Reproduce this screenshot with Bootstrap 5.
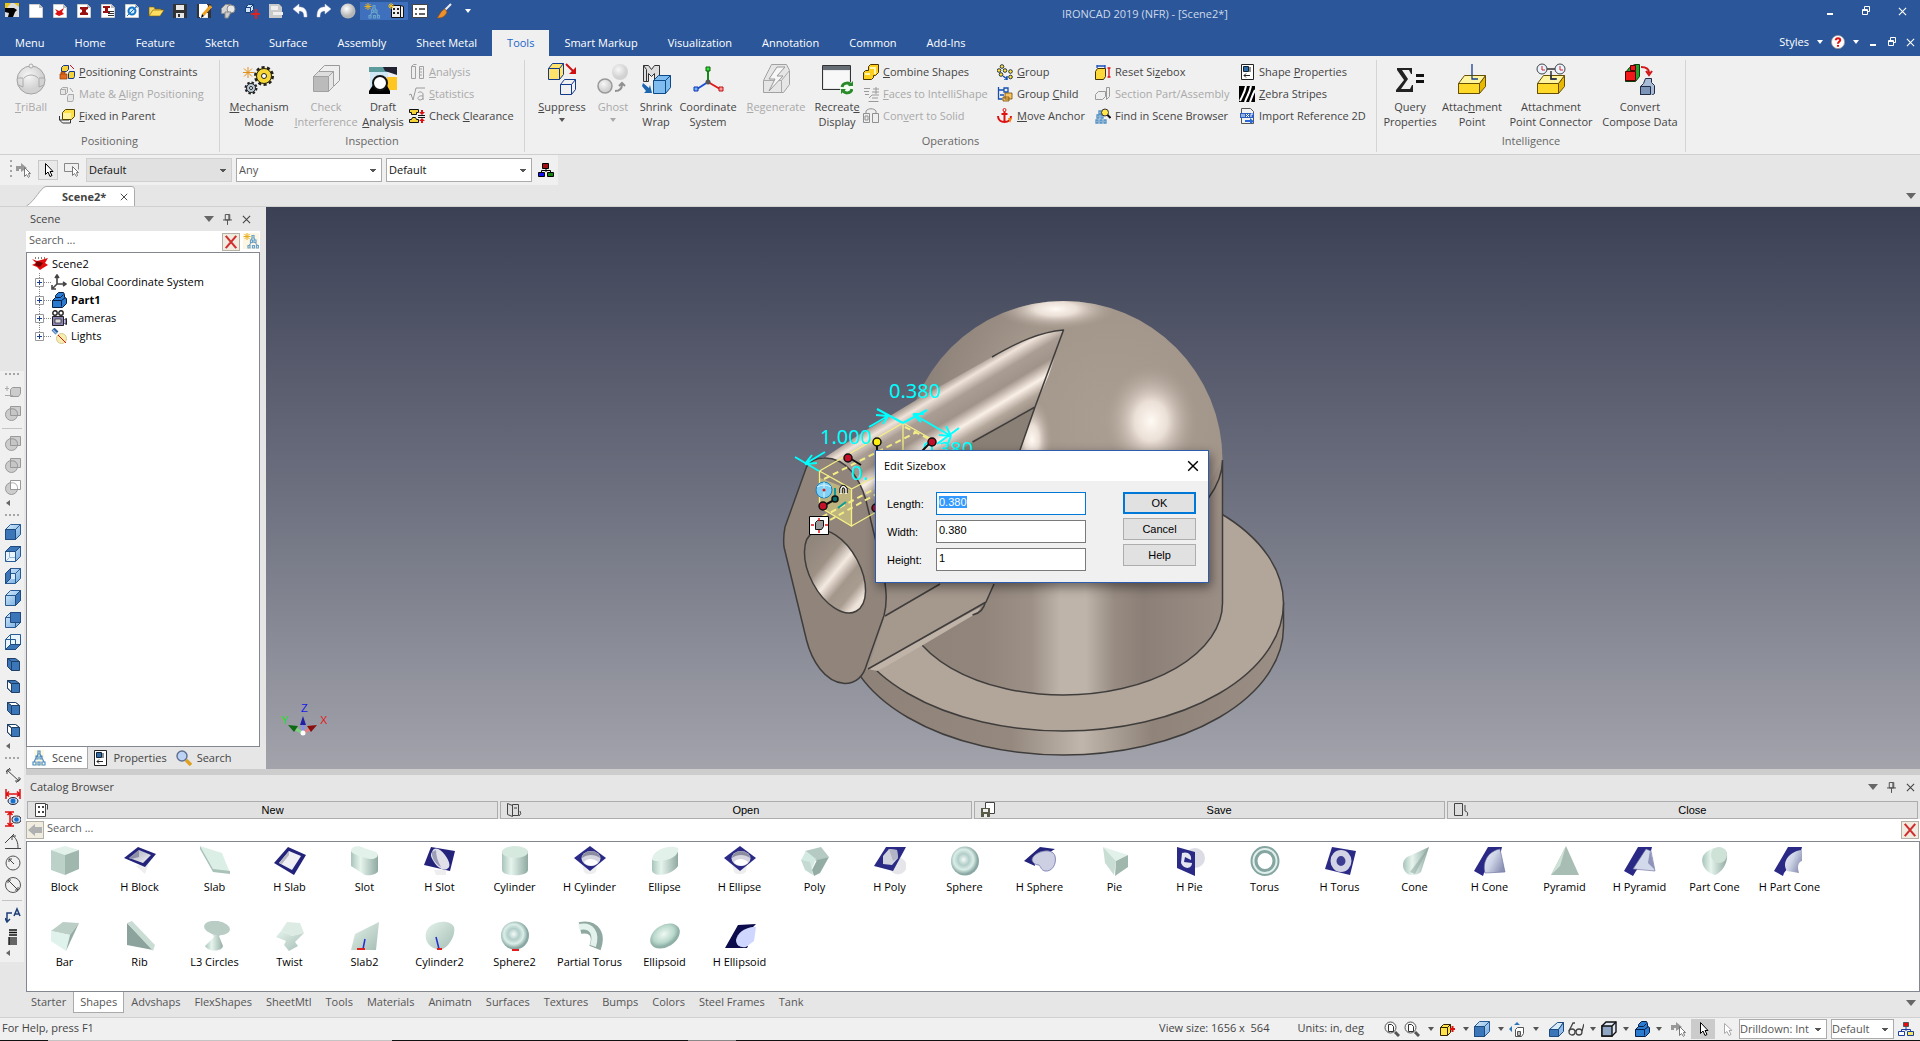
<!DOCTYPE html>
<html lang="en">
<head>
<meta charset="utf-8">
<meta name="viewport" content="width=device-width, initial-scale=1">
<title>IRONCAD 2019 (NFR) - [Scene2*]</title>
<link href="https://cdn.jsdelivr.net/npm/bootstrap@5.3.0/dist/css/bootstrap.min.css" rel="stylesheet">
<style>
  :root { --blue:#2b579a; --panel:#e6e6e6; --strip:#f0f0f0; --ink:#444; }
  body { font-family:"Open Sans","Noto Sans",sans-serif; font-size:11px; line-height:16px; color:var(--ink); background:var(--panel); min-height:100vh; overflow:hidden; }
  button, input, select { font:inherit; color:inherit; }
  .flat { background:none; border:0; padding:0; }
  a { color:inherit; text-decoration:none; }
  svg { display:block; flex:none; }
  .defs { position:absolute; }
  .i16 { width:16px; height:16px; }
  .i32 { width:32px; height:32px; }
  .tri { width:0; height:0; border:3px solid transparent; border-top:4px solid #555; border-bottom:0; flex:none; }
  .tri-lg { border-width:5px; border-top-width:6px; border-top-color:#666; border-bottom-width:0; }
  .tri-w { border-top-color:#fff; }
  .tri-off { border-top-color:#aaa; }

  /* title bar */
  .topbar { background:var(--blue); color:#fff; }
  .qat { height:28px; padding-top:2px; }
  .qat .flat { width:24px; height:18px; display:grid; place-items:center; }
  .qat .lit { background:#3f70bd; }
  .apptitle { color:#cdd9ea; padding:4px 0 0 370px; }
  .winbtns .flat { width:36px; }
  .menu-row { height:28px; }
  .menu-row .nav-item a { display:block; padding:0 15px; line-height:26px; height:26px; margin-top:2px; }
  .menu-row .nav-item .current { background:var(--strip); color:#1a66c8; }
  .mdi .flat { width:19px; display:grid; place-items:center; }

  /* ribbon */
  .ribbon { background:var(--strip); border-bottom:1px solid #cfcfcf; }
  .rgroup { border-right:1px solid #d4d4d4; margin:4px 0 2px; }
  .rbody { display:grid; height:73px; }
  .g-pos { grid-template-columns:54px 161px; padding-left:4px; }
  .g-ins { grid-template-columns:70px 64px 50px 116px; padding-left:4px; }
  .g-ops { grid-template-columns:56px 46px 40px 64px 72px 50px 134px 98px 144px 138px; padding-left:9px; }
  .g-int { grid-template-columns:66px 58px 100px 84px; }
  .g-int .rbig:last-child { padding-right:6px; }
  .rtitle { height:19px; text-align:center; color:#666; }
  .rbig { display:flex; flex-direction:column; align-items:center; padding-top:3px; line-height:15px; white-space:nowrap; }
  .rbig svg { margin-bottom:4px; }
  .rcol { padding-top:1px; }
  .rsmall { display:flex; align-items:center; height:22px; gap:4px; white-space:nowrap; }
  .rsmall svg { margin-left:1px; }
  .off { color:#a9a9a9; }
  .off svg { filter:grayscale(1); opacity:.5; }

  /* selection bar */
  .selbar { background:var(--strip); width:max-content; height:30px; padding:0 2px 0 10px; }
  .selbar .flat { width:20px; height:20px; display:grid; place-items:center; }
  .selbar .pressed { border:1px solid #c9c9c9; background:#e9e9e9; }
  .grip { width:2px; height:20px; margin-right:2px; background:repeating-linear-gradient(#a5a5a5 0 2px,transparent 2px 5px); }
  .combo { appearance:none; border:1px solid #ababab; border-radius:0; background:#fff conic-gradient(from 315deg at 50% 100%,#555 90deg,transparent 0) no-repeat right 5px center/6px 3px; padding:0 14px 0 2px; height:24px; width:146px; color:#111; }
  .combo:disabled { background-color:#e1e1e1; opacity:1; border-color:#d0d0d0; color:#111; }
  .combo.soft { color:#555; }

  .doc-row { height:22px; border-bottom:1px solid #d0d0d0; }
  .doc-tab { margin-left:26px; height:20px; width:109px; position:relative; padding:2px 7px 0 36px; }
  .doc-tab > svg { position:absolute; left:0; top:0; }
  .doc-tab > b, .doc-tab > button { position:relative; }

  /* vertical tools */
  .tools { width:26px; flex:none; }
  .toolstrip { background:var(--strip); margin-top:164px; width:24px; }
  .toolstrip .flat { width:24px; height:22px; display:grid; place-items:center; padding-left:2px; }
  .toolstrip hr { margin:4px 2px 3px; border:0; border-top:1px solid #c4c4c4; opacity:1; }
  .hgrip { width:15px; height:2px; margin:2px 0 5px 5px; background:repeating-linear-gradient(90deg,#a5a5a5 0 2px,transparent 2px 4px); }
  .left-tri { border:3px solid transparent; border-right:4px solid #666; border-left:0; width:0; height:0; margin:2px 0 6px 6px; }

  /* scene panel */
  .scene { width:234px; flex:none; }
  .pane-head { height:24px; color:#444; }
  .hbtn { width:19px; display:grid; place-items:center; }
  .tree { background:#fff; border:1px solid #828790; list-style:none; padding:2px 0 0 5px; margin:0; color:#000; }
  .tree li { height:18px; display:flex; align-items:center; }
  .tree .kid { padding-left:3px; }
  .search { border:0; outline:0; background:#fff; color:#555; padding:0 3px 4px; height:20px; min-width:0; }
  .search::placeholder { color:#5a5a5a; opacity:1; }
  .findrow { background:#fff; display:flex; align-items:flex-start; height:21px; }
  .catfind { height:22px; padding-right:1px; }
  .xbtn { width:18px; height:18px; margin-top:2px; border:1px solid #b5b0a5; background:#f0ece0; padding:0; display:grid; place-items:center; }
  .treebtn { margin:2px 1px 0 3px; background:#fdf6e2; }
  .ptab { height:22px; padding:0 5px 0 4px; display:flex; align-items:center; gap:5px; }
  .ptab.on { background:#fff; border:1px solid #aaa; border-top:0; }

  /* viewport */
  .view3d { background:linear-gradient(#3b4055,#6c6f7e 50%,#a2a3ab); position:relative; margin-left:6px; }
  .view3d > svg { position:absolute; left:0; top:0; width:100%; height:100%; }
  .dlg { position:absolute; left:609px; top:243px; width:334px; background:#f0f0f0; border:1px solid #2b5cb0; box-shadow:2px 4px 10px rgba(0,0,0,.45); color:#000; font-family:"Liberation Sans",Arial,sans-serif; }
  .dlg-head { background:#fff; height:30px; padding:0 9px 0 8px; font-family:"Open Sans",sans-serif; }
  .dlg-body { padding:11px 12px 11px 11px; }
  .dlg .fields { display:grid; grid-template-columns:49px 150px; row-gap:5px; align-items:center; }
  .dlg input { height:23px; border:1px solid #7a7a7a; padding:0 3px 4px 2px; outline:0; background:#fff; }
  .dlg input:focus { border-color:#0078d7; }
  .dlg input::selection { background:#3399ff; color:#fff; }
  .dlg .pushes { display:grid; gap:4px; align-content:start; margin-left:auto; }
  .push { width:73px; height:22px; border:1px solid #adadad; background:#e1e1e1; padding:0; }
  .push.def { border:2px solid #0078d7; }

  /* catalog */
  .split { height:6px; background:#cdcdcd; }
  .catbtns { display:grid; grid-template-columns:repeat(4,1fr); gap:2px; padding:2px 2px 0 1px; font-family:"Liberation Sans",Arial,sans-serif; color:#000; }
  .catbtn { height:18px; border:1px solid #adadad; background:#e1e1e1; position:relative; padding:0 0 0 20px; }
  .catbtn svg { position:absolute; left:5px; top:0; }
  .shapes { background:#fff; border:1px solid #828790; height:151px; padding-right:60px; color:#000; }
  .shape { width:75px; height:75px; padding-top:4px; display:flex; flex-direction:column; align-items:center; white-space:nowrap; }
  .shape svg { width:32px; height:30px; margin-bottom:3px; }
  .ctabs { height:25px; color:#555; }
  .ctabs a { padding:2px 6px; height:21px; border:1px solid transparent; border-top:0; }
  .ctabs a:first-child { padding-left:4px; }
  .ctabs a.on { background:#fff; border-color:#aaa; }

  /* status bar */
  .status { height:23px; background:var(--strip); border-top:1px solid #d0d0d0; padding:0 2px; }
  .status > span { padding-bottom:2px; }
  .status .flat { display:grid; place-items:center; height:20px; width:24px; }
  .status .drop { width:35px; display:flex; align-items:center; justify-content:space-between; padding:0 5px 0 0; }
  .status .tight { width:33px; }
  .status .pressed { background:#cbcbcb; }
  .status .combo { height:20px; color:#555; padding-left:0; }
  .status .drill { width:88px; }
  .status .conf { width:63px; }
  .edge { height:1px; background:linear-gradient(90deg,#111 48px,#c4c4c4 0 392px,#111 0 688px,#888 0 736px,#111 0); }
</style>
</head>
<body class="d-flex flex-column">

<svg width="0" height="0" class="defs" aria-hidden="true">
  <defs>
    <linearGradient id="gCyl"><stop offset="0" stop-color="#a9c4bb"/><stop offset=".35" stop-color="#e6f5ee"/><stop offset="1" stop-color="#8fa9a1"/></linearGradient>
    <linearGradient id="gPale" x2="1" y2="1"><stop offset="0" stop-color="#e4f3ec"/><stop offset="1" stop-color="#a6beb5"/></linearGradient>
    <linearGradient id="gGrey" x2="1" y2="1"><stop offset="0" stop-color="#a6a7ba"/><stop offset="1" stop-color="#f4f4f8"/></linearGradient>
    <linearGradient id="gLav" x2="1" y2=".6"><stop offset="0" stop-color="#eef0fa"/><stop offset=".5" stop-color="#cdd4e6"/><stop offset="1" stop-color="#8c92b4"/></linearGradient>
    <radialGradient id="gBall" cx=".45" cy=".45"><stop offset="0" stop-color="#f4fbf8"/><stop offset=".4" stop-color="#b2cdc8"/><stop offset=".7" stop-color="#dbeee8"/><stop offset="1" stop-color="#8aa8a3"/></radialGradient>
    <radialGradient id="gEgg" cx=".5" cy=".4"><stop offset="0" stop-color="#eef9f4"/><stop offset=".7" stop-color="#b9d8cc"/><stop offset="1" stop-color="#8fb0a6"/></radialGradient>
    <linearGradient id="gBlue" y2="1" x2="1"><stop offset="0" stop-color="#d8ebfb"/><stop offset="1" stop-color="#6fa8de"/></linearGradient>
    <radialGradient id="gOrb" cx=".4" cy=".35"><stop offset="0" stop-color="#fff"/><stop offset="1" stop-color="#b5b5b5"/></radialGradient>
  </defs>

  <!-- small icons, 16 x 16 -->
  <symbol id="app" viewBox="0 0 16 16"><path fill="#ddd" d="M1 1h14v14H1z"/><path fill="#e8c418" d="M1 1h6l-5 6H1zM10 1h5v4z"/><path d="M1 6h9l3 2-2 2-2 5H4l1-4-4-1z"/></symbol>
  <symbol id="page" viewBox="0 0 16 16"><path fill="#fff" stroke="#ccc" d="M1.500 1.500h10l3 3v10h-13z"/><path fill="#bbb" d="M11 1l4 4h-4z"/></symbol>
  <symbol id="page-red" viewBox="0 0 16 16"><use href="#page"/><path fill="#d11" d="M3 6l4 2 5-3-2 4 2 2-5 2-4-2 2-2z"/></symbol>
  <symbol id="page-i" viewBox="0 0 16 16"><use href="#page"/><path fill="#911" d="M4 4h8v2l-2 1v2l2 1v2H4v-2l2-1V7L4 6z"/></symbol>
  <symbol id="page-ii" viewBox="0 0 16 16"><use href="#page"/><path fill="#911" d="M3 3h7v2H8v3h2v2H3V8h2V5H3z"/><path stroke="#333" d="M8 10.500h6M8 12.500h6M8 8.500h6"/></symbol>
  <symbol id="page-blue" viewBox="0 0 16 16"><use href="#page"/><circle cx="8" cy="8" r="3.500" fill="#cfe8ff" stroke="#1976c5" stroke-width="2"/><path stroke="#1976c5" d="M3 13l10-10"/></symbol>
  <symbol id="folder" viewBox="0 0 16 16"><path fill="#f6d567" stroke="#7a5a00" stroke-width=".6" d="M1 13V4h5l1 2h6v2"/><path fill="#ffdf60" stroke="#7a5a00" stroke-width=".6" d="M1 13l4-6h11l-4 6z"/></symbol>
  <symbol id="disk" viewBox="0 0 16 16"><path fill="#333" d="M1 1h14v14H1z"/><path fill="#e7e7e7" d="M4 2h8v5H4zM4 10h8v5H4z"/><path fill="#333" d="M6 11h2v3H6z"/></symbol>
  <symbol id="disk-edit" viewBox="0 0 16 16"><use href="#disk"/><path fill="#fff" d="M3 1h8v13H3z"/><path stroke="#f0a020" stroke-width="3" d="M7 12l8-9"/><path d="M5 15l1-4 2 2z"/></symbol>
  <symbol id="greybox" viewBox="0 0 16 16"><path fill="#d4d4d4" stroke="#8a8a8a" d="M1.500 5.500l4-4h5v5l-4 4h-5z"/><circle cx="11" cy="6" r="4" fill="#e8e8e8" stroke="#8a8a8a"/><path fill="#ccc" stroke="#888" d="M5 9h6l-3 6H5z"/></symbol>
  <symbol id="addpart" viewBox="0 0 16 16"><path fill="#cfe3fa" stroke="#163f7a" d="M1.500 4.500l3-3h5v5l-3 3h-5z"/><path stroke="#163f7a" fill="none" d="M1.500 4.500h5v5M6.500 4.500l3-3"/><path stroke="#d22" stroke-width="2" d="M12 6v10M7 11h9"/></symbol>
  <symbol id="greydisk" viewBox="0 0 16 16"><path fill="#c9c9c9" d="M1 1h10l3 3v11H1z"/><path fill="#eee" d="M3 3h7v4H3zM5 9h10v3H5z"/></symbol>
  <symbol id="undo" viewBox="0 0 16 16"><path fill="#fff" stroke="#ccd" stroke-width=".5" d="M1 6l6-5v3c5 0 8 2 8 10h-3c0-4-1-6-5-6v3z"/></symbol>
  <symbol id="redo" viewBox="0 0 16 16"><path fill="#fff" stroke="#ccd" stroke-width=".5" d="M15 6L9 1v3C4 4 1 6 1 14h3c0-4 1-6 5-6v3z"/></symbol>
  <symbol id="orb" viewBox="0 0 16 16"><circle cx="8" cy="8" r="7.500" fill="url(#gOrb)"/></symbol>
  <symbol id="scenetree" viewBox="0 0 16 16"><path fill="none" stroke="#69a3cc" stroke-width="1.200" d="M9 2.500h2v2.500H9zM7.500 7h2v2.500h-2zM11 7h2v2.500h-2zM5 12.500h2v2.500H5zM9.500 12.500h2v2.500h-2zM13.500 12.500h2v2.500h-2zM9 5l-1 2M11 5l1 2M8 10l-2 2.500M12.500 10l2 2.500"/><path stroke="#e8b020" d="M4 0v7M.5 3.500h7M1.500 1l5 5M6.500 1l-5 5"/></symbol>
  <symbol id="atree" viewBox="0 0 16 16"><path fill="#fff8e0" d="M3 0h10v16H3z"/><path fill="none" stroke="#4f8fc4" stroke-width="1.200" d="M7 1h2v3H7zM5 6h2v3H5zM9 6h2v3H9zM2 12h3v3H2zM7 12h2v3H7zM11 12h3v3h-3zM7 4L3 12M9 4l4 8"/></symbol>
  <symbol id="gridicon" viewBox="0 0 16 16"><path fill="#eee" stroke="#111" d="M3.500 2.500h9v12h-9zM12.500 2.500l3 1v11h-3"/><path fill="#222" d="M5 5h2v2H5zM9 5h2v2H9zM5 9h2v2H5zM9 9h2v2H9z"/><path stroke="#f0c020" d="M3 0v6M0 3h6M1 1l4 4M5 1L1 5"/></symbol>
  <symbol id="listicon" viewBox="0 0 16 16"><path fill="#fff" stroke="#444" d="M.5 1.500h15v13H.5z"/><path stroke="#333" stroke-width="1.500" d="M3 6h2M3 11h2M7 6h6M7 11h6"/></symbol>
  <symbol id="brush" viewBox="0 0 16 16"><path stroke="#eee" stroke-width="2" d="M8 8l7-7"/><path fill="#f0902a" stroke="#8a4a10" stroke-width=".6" d="M9 6l2 3c-2 5-5 6-10 6 3-3 3-7 8-9z"/></symbol>
  <symbol id="cubes-y" viewBox="0 0 16 16"><path fill="#f4d33a" stroke="#123a8c" d="M2.500 3.500l2-2h5v4l-2 2h-5zM9.500 9.500l1-2h5v5l-1 2h-5z"/><path fill="#e06a20" stroke="#963c00" stroke-width=".7" d="M1 10h7v5H1zM2 10V8h4v2"/><path stroke="#d11" d="M11 1l4 4"/></symbol>
  <symbol id="cubes-g" viewBox="0 0 16 16"><path fill="#ddd" stroke="#666" d="M1.500 3.500l2-2h5v5l-2 2h-5zM8.500 10.500l1-2h5v5l-1 2h-5zM1.500 3.500h5v5"/><path stroke="#555" d="M11 2l3 4"/></symbol>
  <symbol id="fixed" viewBox="0 0 16 16"><path fill="none" stroke="#333" d="M.5 8v4l3 3h8v-3M1 12h9"/><path fill="#ffdf45" stroke="#554400" d="M3.500 4.500l3-3h9v7l-3 3h-9z"/><path fill="#fff3a0" d="M4 5h8v6H4z"/></symbol>
  <symbol id="analysis" viewBox="0 0 16 16"><path fill="#eee" stroke="#555" d="M2.500 2.500h4v12h-4zM10.500 2.500h4v12h-4zM2.500 2.500l2-2h3"/><path stroke="#555" d="M11 5h2M11 8h2M11 11h2"/></symbol>
  <symbol id="stat" viewBox="0 0 16 16"><path fill="none" stroke="#444" d="M0 9l2-1 2 6 3-12h9M9 7c1-2 5-1 5 1v6M14 10c-6-1-6 4-3 4 1 0 3-1 3-2"/></symbol>
  <symbol id="clear" viewBox="0 0 16 16"><path fill="#f4d33a" stroke="#111" d="M.5 1.500h9v3h-2v2h-5v-2h-2zM.5 14.500h9v-3h-2l-1-2h-3l-1 2h-2z"/><path stroke="#111" d="M9 7.500h7M9 9.500h7"/><path fill="#d11" d="M12 2h2v2h2l-3 3-3-3h2zM12 15h2v-2h2l-3-3-3 3h2z"/></symbol>
  <symbol id="combine" viewBox="0 0 16 16"><path fill="#ffcf20" stroke="#4a3500" d="M5.500 2.500l2-2h8v8l-3 3h-2v2l-2 2h-8v-7l2-2h3z"/><path stroke="#fff6b0" stroke-width="2" fill="none" d="M7 4h5v6M2 10h5"/></symbol>
  <symbol id="faces" viewBox="0 0 16 16"><path fill="none" stroke="#444" d="M1 2.500h6M1 5.500h5M2 8.500h4M5.500 15.500h10M6 12l3-3h7M9 12h6M9 6h7M13 1v7M10 3h6"/></symbol>
  <symbol id="convert" viewBox="0 0 16 16"><path fill="#eee" stroke="#333" d="M.5 5.500h6v9h-6zM9.500 5.500h6v9h-6zM3 6v-3c2-3 8-3 10 0v3M2 8h3v4H2z"/></symbol>
  <symbol id="group" viewBox="0 0 16 16"><g fill="#ffe23a" stroke="#123" stroke-width=".9"><circle cx="5" cy="2.500" r="1.800"/><circle cx="2" cy="6.500" r="1.800"/><circle cx="8" cy="6.500" r="1.800"/><circle cx="13.500" cy="7.500" r="1.800"/><circle cx="4" cy="10.500" r="1.800"/><circle cx="13.500" cy="13" r="1.800"/></g><path fill="none" stroke="#1550b0" stroke-width="1.500" d="M6 12l4 3M10 12v4H7"/></symbol>
  <symbol id="gchild" viewBox="0 0 16 16"><path fill="none" stroke="#1550b0" stroke-width="1.300" d="M1.500 1v12h4M1.500 4h5M7 2h4v4H7zM3 9h4"/><path fill="#f6c56a" stroke="#7a4a00" stroke-width=".8" d="M8 7h7v6H8zM6 11h6v4H6z"/></symbol>
  <symbol id="anchor" viewBox="0 0 16 16"><path fill="none" stroke="#d11" stroke-width="2" d="M7.500 3v11M4.500 6h6M1 8c0 4 3 6 6.500 6S14 12 14 8"/><circle cx="7.500" cy="2" r="1.500" fill="#fff" stroke="#d11"/><path fill="#f08010" d="M11 10h4l-2 5z"/></symbol>
  <symbol id="resetbox" viewBox="0 0 16 16"><path fill="#ffd93a" stroke="#443300" d="M.5 7.500l2-3h8v8l-2 3h-8z"/><path stroke="#1a50c0" stroke-width="1.300" fill="none" d="M2 1v3M10 1v3M2 2h8"/><path stroke="#d11" stroke-width="1.300" d="M14 4v9M12.500 4h3M12.500 13h3"/></symbol>
  <symbol id="section" viewBox="0 0 16 16"><path fill="#eee" stroke="#444" d="M.5 8.500l3-3h7v5l-3 3h-7zM11.500 1.500h3v9l-3 3z"/></symbol>
  <symbol id="find" viewBox="0 0 16 16"><path fill="none" stroke="#4f8fc4" stroke-width="1.300" d="M4 3h2v3H4zM2 7h2v3H2zM6 7h2v3H6zM1 12h2v3H1zM5 12h2v3H5zM9 12h2v3H9z"/><circle cx="10" cy="4.500" r="3.500" fill="#ffe64a" stroke="#333"/><path stroke="#111" stroke-width="2" d="M12.500 7l3 3"/></symbol>
  <symbol id="props" viewBox="0 0 16 16"><path fill="#fff" stroke="#222" d="M2.500.5h12v15h-12z"/><path fill="#2f6aa8" stroke="#123" d="M4.500 2.500h5v5h-5z"/><path stroke="#222" fill="none" d="M11 3v5M5 11.500h6M7 9.500l-2 2 2 2"/></symbol>
  <symbol id="zebra" viewBox="0 0 16 16"><path d="M0 0h16v16H0z"/><path stroke="#fff" stroke-width="2" fill="none" d="M1 15c2-5 4-6 6-15M6 16c2-6 4-7 6-16M11 16c2-5 2-6 5-12"/></symbol>
  <symbol id="dxf" viewBox="0 0 16 16"><path fill="#f2f2f2" stroke="#555" d="M2.500.5h9l3 3v12h-12z"/><path fill="#2a5fc0" d="M1 5h14v5H1z"/><path stroke="#fff" fill="none" d="M3 6v3M5 6v3M7 6l3 3M10 6L7 9M12 9V6h2"/><path fill="#2a6ad8" d="M6 12h5v-2l4 3.500-4 2.500v-2H6z"/></symbol>
  <symbol id="arrowcur" viewBox="0 0 16 16"><path fill="#999" d="M0 9V4h5V1l6 5-6 4V7H3v2z"/><path fill="#fff" stroke="#777" d="M8.500 5.500v9l2-2 2 3 1-1-1-3h2z"/></symbol>
  <symbol id="cursor" viewBox="0 0 16 16"><path fill="#fff" stroke="#000" d="M5.500 1.500v11l2.500-2.500 2 4.500 2-1-2-4h3z"/></symbol>
  <symbol id="cursor-g" viewBox="0 0 16 16"><path fill="#fff" stroke="#aaa" d="M5.500 2.500v10l2.500-2 2 4 2-1-2-4h3z"/></symbol>
  <symbol id="boxcur" viewBox="0 0 16 16"><path fill="none" stroke="#888" d="M8 9.500H.5v-8h14v6"/><path fill="#fff" stroke="#777" d="M8.500 4.500v9l2-2 2 3 1-1-1-3h2z"/></symbol>
  <symbol id="hier" viewBox="0 0 16 16"><path fill="none" stroke="#000" d="M8 6v4M3.500 12V8.500h9V12"/><path fill="#a11010" stroke="#000" d="M4.500 1.500h6v5h-6z"/><path fill="#1010f0" stroke="#000" d="M.5 10.500h6v4h-6z"/><path fill="#108010" stroke="#000" d="M9.500 10.500h6v4h-6z"/></symbol>
  <symbol id="hier2" viewBox="0 0 16 16"><path fill="none" stroke="#1a3fa0" d="M8 6v4M3.500 12V8.500h9V12"/><path fill="#e01010" stroke="#555" d="M5.500 1.500h5v4h-5z"/><path fill="#fff" stroke="#1a3fa0" d="M.5 10.500h6v4h-6z"/><path fill="#f4e860" stroke="#1a3fa0" d="M9.500 10.500h6v4h-6z"/></symbol>
  <symbol id="x" viewBox="0 0 10 10"><path stroke="currentColor" stroke-width="1.200" d="M1 1l8 8M9 1L1 9"/></symbol>
  <symbol id="xred" viewBox="0 0 16 16"><path stroke="#d03030" stroke-width="2.400" d="M2 1l12 14M14 1L2 15"/></symbol>
  <symbol id="pin" viewBox="0 0 10 12"><path fill="none" stroke="currentColor" d="M2.500.5h5v6h-5zM0 6.500h10M5 7v5M6.500 1v5"/></symbol>
  <symbol id="min" viewBox="0 0 10 10"><path fill="currentColor" d="M2 7h6v2H2z"/></symbol>
  <symbol id="restore" viewBox="0 0 10 10"><path fill="none" stroke="currentColor" d="M3.500 3V.5h5v5H6.500M1.500 3.500h5v5h-5zM1 4.500h6"/></symbol>
  <symbol id="help" viewBox="0 0 16 16"><circle cx="8" cy="8" r="7.500" fill="#fff" stroke="#999"/><path fill="none" stroke="#e01010" stroke-width="2.400" d="M5.500 6c0-3 5-3 5 0 0 1.500-2.500 1.500-2.500 4M8 11.500v2"/></symbol>
  <!-- tree icons -->
  <symbol id="t-scene" viewBox="0 0 16 16"><path fill="#e01010" d="M0 3l5 2 4-1 7-2-3 5 3 2-5 3-3 2-3-3-5-2 4-2z"/><path fill="#700" d="M5 5l6 2-3 4-5-2z"/><path stroke="#000" stroke-dasharray="1 2" d="M3 2h10"/></symbol>
  <symbol id="t-axes" viewBox="0 0 16 16"><path fill="none" stroke="#444" stroke-width="1.600" d="M6 2v8h8M6 10l-4 4M4 4l2-3 2 3M12 8l3 2-3 2M1 11v4h4"/></symbol>
  <symbol id="t-part" viewBox="0 0 16 16"><path fill="#2a7bd0" stroke="#06204a" d="M1.500 8.500l3-3v-2l3-3h5l1 2v3l2 1v5l-4 4h-10z"/><path fill="none" stroke="#06204a" d="M1.500 8.500h9v6M10.500 8.500l4-3M4.500 5.500h5l3-3"/></symbol>
  <symbol id="t-cam" viewBox="0 0 16 16"><g fill="#fff" stroke="#222" stroke-width="1.400"><circle cx="4" cy="3" r="2.200"/><circle cx="10" cy="3" r="2.200"/></g><path fill="#8a84b8" stroke="#222" d="M1.500 6.500h11v9h-11zM13.500 9.500l2-1v6l-2-1"/><path fill="#ddd" stroke="#222" stroke-width=".7" d="M4 9h6v4H4z"/></symbol>
  <symbol id="t-light" viewBox="0 0 16 16"><circle cx="10.500" cy="10.500" r="5" fill="#f6edb0" stroke="#d8c890"/><path stroke="#2d5c96" stroke-width="4" d="M2 1l4 4"/><path stroke="#9cc4ee" stroke-width="1.500" d="M2 2l4 4"/><path stroke="#d11" d="M7 7l8 8"/></symbol>
  <symbol id="plus" viewBox="0 0 9 9"><path fill="#fff" stroke="#999" d="M.5.5h8v8h-8z"/><path stroke="#1a3f8c" d="M2 4.500h5M4.500 2v5"/></symbol>
  <symbol id="mag" viewBox="0 0 16 16"><path stroke="#e0a020" stroke-width="3.500" d="M10 10l5 5"/><circle cx="6" cy="6" r="5" fill="#bcd3f6" stroke="#5f6f8f" stroke-width="1.400"/></symbol>
  <!-- view and tool strip icons -->
  <symbol id="v-base" viewBox="0 0 16 16"><path fill="url(#gBlue)" stroke="#285a94" d="M.5 5.500l5-5h10v10l-5 5H.5z"/><path fill="none" stroke="#285a94" d="M.5 5.500h10v10M10.500 5.500l5-5"/></symbol>
  <symbol id="v-front" viewBox="0 0 16 16"><use href="#v-base"/><path fill="#3a76b8" stroke="#1f4a80" d="M.5 5.500h10v10H.5z"/></symbol>
  <symbol id="v-top" viewBox="0 0 16 16"><use href="#v-base"/><path fill="#3a76b8" stroke="#1f4a80" d="M.5 5.500l5-5h10l-5 5z"/><path fill="#eaf4fd" d="M1 6h9v9H1z"/><path fill="none" stroke="#8fb4dc" d="M4.500 6v5.500L1 15M5 11.500h5"/></symbol>
  <symbol id="v-left" viewBox="0 0 16 16"><use href="#v-base"/><path fill="#3a76b8" stroke="#1f4a80" d="M.5 5.500l5-5v10l-5 5z"/><path fill="#d8ebfb" d="M6 6h4v5H6z"/></symbol>
  <symbol id="v-right" viewBox="0 0 16 16"><use href="#v-base"/><path fill="#3a76b8" stroke="#1f4a80" d="M10.500 5.500l5-5v10l-5 5z"/></symbol>
  <symbol id="v-back" viewBox="0 0 16 16"><use href="#v-base"/><path fill="#3a76b8" stroke="#1f4a80" d="M5.500.5h10v10h-10z"/></symbol>
  <symbol id="v-bottom" viewBox="0 0 16 16"><path fill="#eaf4fd" stroke="#285a94" d="M.5 5.500l5-5h10v10l-5 5H.5zM5.500 1v10M.5 5.500h10v10"/><path fill="#3a76b8" stroke="#1f4a80" d="M.5 15.500l5-5h10l-5 5z"/></symbol>
  <symbol id="v-iso" viewBox="0 0 16 16"><path fill="#3a76b8" stroke="#1f3f66" d="M2.500 2.500h8l4 3v9H6.500l-4-4z"/><path fill="none" stroke="#1f3f66" d="M2.500 2.500l4 3h8M6.500 5.500v9"/></symbol>
  <symbol id="v-iso2" viewBox="0 0 16 16"><use href="#v-iso"/><path fill="#fff" stroke="#1f3f66" d="M2.500 3l4 3v8l-4-4z"/></symbol>
  <symbol id="v-iso3" viewBox="0 0 16 16"><use href="#v-iso"/><path fill="#fff" stroke="#1f3f66" d="M2.500 2.500h8l4 3h-8z"/></symbol>
  <symbol id="v-iso4" viewBox="0 0 16 16"><use href="#v-iso3"/><path fill="#fff" stroke="#1f3f66" d="M2.500 3l4 3v8l-4-4z"/></symbol>
  <symbol id="b-add" viewBox="0 0 16 16"><path fill="#ccc" stroke="#999" d="M5.500 6.500l2-2h8v6l-2 3h-8z"/><path stroke="#aaa" d="M0 5.500h4M2 3v5M0 12.500h8"/></symbol>
  <symbol id="b-one" viewBox="0 0 16 16"><circle cx="6.500" cy="9.500" r="6" fill="#ccc" stroke="#999"/><path fill="#c4c4c4" fill-opacity=".8" stroke="#999" d="M5.500 1.500h10v9h-10z"/><path fill="none" stroke="#999" d="M6 4c4-1 7 2 6.500 6"/></symbol>
  <symbol id="b-two" viewBox="0 0 16 16"><circle cx="6.500" cy="9.500" r="6" fill="#ccc" stroke="#999"/><path fill="#fff" stroke="#999" d="M5.500 1.500h10v9h-10z"/><path fill="none" stroke="#aaa" d="M6 4c4-1 7 2 6.500 6"/></symbol>
  <symbol id="d-lin" viewBox="0 0 16 16"><path fill="none" stroke="#444" d="M2 3l12 11M1 5l4-4M11 15.500l5-4M2 7V3h4M10 14h4v-4"/></symbol>
  <symbol id="d-h" viewBox="0 0 16 16"><path stroke="#e01010" stroke-width="1.500" fill="none" d="M1 0v10M15 0v10M1 5h14M4 2.500L1.500 5 4 7.500M12 2.500L14.500 5 12 7.500"/><ellipse cx="8" cy="12" rx="5" ry="3.500" fill="#cde" stroke="#223"/><circle cx="8" cy="12" r="2.500" fill="#1670d0"/></symbol>
  <symbol id="d-v" viewBox="0 0 16 16"><path stroke="#e01010" stroke-width="1.500" fill="none" d="M0 1h9M0 15h9M5 1v14M2.500 4L5 1.500 7.500 4M2.500 12L5 14.500 7.500 12"/><ellipse cx="11.500" cy="8.500" rx="4.500" ry="3.500" fill="#cde" stroke="#223"/><circle cx="11.500" cy="8.500" r="2.300" fill="#1670d0"/></symbol>
  <symbol id="d-ang" viewBox="0 0 16 16"><path fill="none" stroke="#444" d="M0 15.500h16M0 10L9 1M8 3c4 3 5 7 5 12M7 7V3h4"/></symbol>
  <symbol id="d-rad" viewBox="0 0 16 16"><circle cx="8" cy="8" r="7" fill="none" stroke="#555"/><path fill="none" stroke="#444" d="M9 9L4 4M4 7V4h3"/></symbol>
  <symbol id="d-dia" viewBox="0 0 16 16"><circle cx="8" cy="8" r="7.500" fill="none" stroke="#555"/><path fill="none" stroke="#444" d="M3 3l10 10M3 6V3h3M10 13h3v-3"/></symbol>
  <symbol id="d-note" viewBox="0 0 16 16"><path fill="none" stroke="#1c3f78" stroke-width="1.500" d="M2 15V6h5M0 11l2 4 3-3M9 9l3-7 3 7M10 7h4"/></symbol>
  <symbol id="d-thread" viewBox="0 0 16 16"><path fill="#666" d="M4 8h8v8H4z"/><path stroke="#111" stroke-width="1.300" d="M4 1h8M4 3.500h8M4 6h8M4 8v8"/></symbol>
  <!-- status icons -->
  <symbol id="zoomp" viewBox="0 0 16 16"><circle cx="6.500" cy="6.500" r="5.500" fill="#f4f4f4" stroke="#555"/><path fill="#fff" stroke="#333" d="M4.500 3.500h3l2 2v5h-5z"/><path stroke="#555" stroke-width="3" d="M11 11l4 4"/></symbol>
  <symbol id="boxy" viewBox="0 0 16 16"><path fill="#ffe34a" stroke="#332200" d="M1.500 6.500l3-3h7v8l-3 3h-7zM1.500 6.500h7v8M8.500 6.500l3-3"/><path stroke="#e01010" stroke-width="2" d="M13.500 5v6M11 8h5"/></symbol>
  <symbol id="walk" viewBox="0 0 16 16"><path fill="#2f75b8" d="M8 1l3 3H5zM0 8l3-3v6z"/><path fill="#fff" stroke="#555" d="M6.500 8.500l2-2h6v6l-2 3h-6z"/><path fill="#bbb" stroke="#555" d="M8.500 10.500h3v4h-3z"/></symbol>
  <symbol id="wedge" viewBox="0 0 16 16"><path fill="#d8ebfb" stroke="#1f4a80" d="M1.500 8.500l8-7h6l-5 7z"/><path fill="#3a76b8" stroke="#1f4a80" d="M1.500 8.500h9v7h-9z"/><path fill="#8fbce8" stroke="#1f4a80" d="M10.500 8.500l5-7v9l-5 5z"/></symbol>
  <symbol id="glasses" viewBox="0 0 16 16"><g fill="none" stroke="#444" stroke-width="1.300"><circle cx="4" cy="11" r="3"/><circle cx="11" cy="11" r="3"/><path d="M1 10L5 2h2M14 10l2-7M7 10h1"/></g></symbol>
  <symbol id="cubebk" viewBox="0 0 16 16"><path fill="#dfe8f4" stroke="#111" stroke-width="1.400" d="M1 5l4-4h10v10l-4 4H1z"/><path fill="#8fa6c4" stroke="#111" stroke-width="1.400" d="M1 5h10v10H1zM11 5l4-4"/></symbol>

  <!-- ribbon icons, 32 x 32 -->
  <symbol id="R-triball" viewBox="0 0 32 32"><circle cx="16" cy="17" r="14" fill="url(#gOrb)" stroke="#555"/><path fill="none" stroke="#666" d="M9 15c4-4 10-4 14 0M2 15h6v9l-5-2M30 15h-6v9l5-2"/><circle cx="16" cy="3" r="2" fill="#eee" stroke="#666"/></symbol>
  <symbol id="R-mech" viewBox="0 0 32 32"><circle cx="21" cy="13" r="8.500" fill="#f7d733" stroke="#222" stroke-width="3" stroke-dasharray="3 2.340"/><circle cx="21" cy="13" r="7.500" fill="#f7d733" stroke="#222"/><circle cx="21" cy="13" r="2.500" fill="#fff" stroke="#222"/><circle cx="8" cy="25" r="5" fill="#a8b8c4" stroke="#222" stroke-width="3" stroke-dasharray="2.200 1.700"/><circle cx="8" cy="25" r="4.500" fill="#b8c8d4" stroke="#222"/><circle cx="8" cy="25" r="1.500" fill="#fff" stroke="#222"/><path stroke="#e0901a" d="M5 4v11M0 9.500h11M1 5.500l8 8M9 5.500l-8 8"/></symbol>
  <symbol id="R-check" viewBox="0 0 32 32"><path fill="#eee" stroke="#444" d="M8.500 8.500l6-6h15v15l-6 6"/><path fill="#ccc" stroke="#555" d="M3.500 13.500l5-5h15l-5 5z"/><path fill="#888" stroke="#555" d="M3.500 13.500h15v15h-15z"/><path fill="#ddd" stroke="#555" d="M18.500 13.500l5-5v15l-5 5z"/></symbol>
  <symbol id="R-draft" viewBox="0 0 32 32"><path fill="#5d9c9c" d="M2 4h28v5H2z"/><path fill="#cfe8f4" d="M3 9h18v18H3z"/><path fill="#ffc520" d="M20 14h10v13H20z"/><path fill="#223" d="M16 4h14v8L18 8z"/><path d="M2 28l6-9h10l5 9v3H2z"/><circle cx="13" cy="20" r="7" fill="#fff" stroke="#111" stroke-width="2"/></symbol>
  <symbol id="R-suppress" viewBox="0 0 32 32"><path fill="#ffe36a" stroke="#123a8c" d="M2.500 5.500l4-5h11v11l-4 5h-11z"/><path fill="none" stroke="#123a8c" d="M2.500 5.500h11v11M13.500 5.500l4-5M14.500 21.500l4-5h11v10l-4 5h-11zM14.500 21.500h11v10M25.500 21.500l4-5"/><path stroke="#d01010" stroke-width="2" d="M20 1l8 8"/><path fill="#d01010" d="M30 4v7h-7z"/></symbol>
  <symbol id="R-ghost" viewBox="0 0 32 32"><circle cx="23" cy="9" r="8" fill="url(#gOrb)"/><circle cx="8" cy="23" r="7" fill="url(#gOrb)" stroke="#444" stroke-width="1.500"/><path fill="none" stroke="#333" stroke-width="2" d="M18 28c5 0 7-2 7-7M22 23l3-3 3 3"/></symbol>
  <symbol id="R-shrink" viewBox="0 0 32 32"><path fill="#ddd" stroke="#333" d="M3.500 2.500h5l3 4 3-4h5v16h-5v-8l-3 3-3-3v8h-5zM3.500 2.500l3 4v12"/><path fill="#7fbcf0" stroke="#0f4a88" d="M13.500 17.500l5-5h12v12l-5 6h-12z"/><path fill="none" stroke="#0f4a88" d="M13.500 17.500h12v13M25.500 17.500l5-5"/><path fill="#1c66b0" d="M3 20l6 5 1-3 2 8-8 0 2-2-4-5z"/></symbol>
  <symbol id="R-coord" viewBox="0 0 32 32"><path stroke="#138a13" stroke-width="2" d="M16 6v13"/><path stroke="#1a50d8" stroke-width="2" d="M16 19L5 26"/><path stroke="#e01818" stroke-width="2" d="M16 19l12 7"/><path fill="#3ae03a" stroke="#0a600a" d="M14 4h4v4h-4z"/><path fill="#6ab4ff" stroke="#1030b0" d="M2 24h4v4H2z"/><path fill="#ff9a9a" stroke="#c01010" d="M27 24h4v4h-4z"/><circle cx="16" cy="19" r="2.500" fill="#555"/></symbol>
  <symbol id="R-regen" viewBox="0 0 32 32"><path fill="#ddd" stroke="#555" d="M3.500 17.500l8-16h15l3 6v14l-6 8h-20z"/><path fill="none" stroke="#666" d="M3.500 17.500h18l8-10M21.500 17.500v12"/><path fill="#fff" stroke="#444" d="M17 4L9 16h6l-6 12 14-15h-6l8-9z"/></symbol>
  <symbol id="R-recreate" viewBox="0 0 32 32"><path fill="#e4e6e8" stroke="#333" d="M1.500 2.500h28v24h-28z"/><path fill="#666c74" d="M2 3h27v4H2z"/><path fill="#f8f8f8" d="M3 8h25v17H3z"/><circle cx="26" cy="25" r="7" fill="#f4fff4"/><path fill="none" stroke="#2a8a2a" stroke-width="3" d="M21 24c1-5 8-5 9-1M31 26c-1 5-8 5-9 1"/><path fill="#2a8a2a" d="M27 23h5v-5zM20 31v-5h5z"/></symbol>
  <symbol id="R-sigma" viewBox="0 0 32 32"><path fill="#222" d="M3 5h15v6h-1l-2-4H8l6 9-7 10h9l2-4h1v7H2v-2l8-10-7-10z"/><path fill="#111" d="M22 11h8v3h-8zM22 17h8v3h-8z"/></symbol>
  <symbol id="R-attach" viewBox="0 0 32 32"><path fill="#e8b800" stroke="#665000" d="M2.500 20.500h21l6-8v11l-6 7h-21z"/><path fill="#fff4a0" stroke="#665000" d="M2.500 20.500l6-8h21l-6 8z"/><path fill="#ffd92a" stroke="#665000" d="M2.500 20.500h21v10h-21z"/><path fill="none" stroke="#16408c" stroke-width="1.300" d="M16 1v15h6"/></symbol>
  <symbol id="R-attach2" viewBox="0 0 32 32"><use href="#R-attach"/><path fill="#f0f0f0" d="M12 0h7v12h-7z"/><path stroke="#333" stroke-width="1.500" d="M9 6h14M16 8v8h5" fill="none"/><g fill="#e8f4ff" stroke="#444"><circle cx="7" cy="6" r="5"/><circle cx="25" cy="6" r="5"/></g><path fill="none" stroke="#d22" d="M7 3v4h3M25 3v4h3"/></symbol>
  <symbol id="R-compose" viewBox="0 0 32 32"><path fill="#28a030" stroke="#0a400a" d="M1.500 9.500l4-5 5-3h5v12l-4 5h-10z"/><path fill="#f01818" stroke="#500" d="M1.500 8.500h10v9h-10zM6.500 2.500h5v5h-5z"/><path fill="#a8bcd8" stroke="#222c44" d="M16.500 23.500l3-3 2-5h6v4l3 3v8l-3 2h-11z"/><path fill="#7c94b8" stroke="#222c44" d="M16.500 23.500h10v8h-10z"/><path stroke="#d01818" stroke-width="2" fill="none" d="M17 4c6 0 8 2 8 6M22 8l3 4 3-4"/></symbol>

  <!-- catalog shapes, 32 x 30 -->
  <symbol id="s-block" viewBox="0 0 32 30"><path fill="#e2f2ea" d="M16 0l14 4-14 5L2 4z"/><path fill="#bcd2c8" d="M2 4l14 5v20L2 24z"/><path fill="#9fb7ad" d="M30 4L16 9v20l14-6z"/></symbol>
  <symbol id="s-hblock" viewBox="0 0 32 30"><path fill="#eee" d="M12 20l9 8 5-14z"/><path fill="#23237c" d="M0 12L14 1l18 7-11 13z"/><path fill="url(#gGrey)" d="M5 12l10-8 12 5-8 8z"/><path fill="#8f90a8" d="M15 4v7l-8 2-2-1z"/></symbol>
  <symbol id="s-slab" viewBox="0 0 32 30"><path fill="#dcefe6" d="M1 0l22 7 8 20-17-3z"/><path fill="#a9c2b7" d="M1 0v3l13 23 17 2v-3l-17-2z"/></symbol>
  <symbol id="s-hslab" viewBox="0 0 32 30"><path fill="#23237c" d="M0 17L14 1l18 8-12 20z"/><path fill="#eeeef4" d="M5 17L15 5l12 5-9 14z"/><path fill="#b8b8c4" d="M5 17L15 5v4l-7 9z"/></symbol>
  <symbol id="s-slot" viewBox="0 0 32 30"><path fill="url(#gCyl)" d="M2 5v15l14 9c6 1 12-1 13-4V9z"/><path fill="#e2f2ea" d="M2 5c0-5 8-6 13-3l12 4c4 3 1 7-5 7-4 0-20-5-20-8z"/></symbol>
  <symbol id="s-hslot" viewBox="0 0 32 30"><path fill="#eee" d="M10 24h12v5H12z"/><path fill="#23237c" d="M7 1l24 4-5 20-26-6z"/><path fill="#dfe0ea" d="M8 6c2-6 8-4 13 3s6 12 2 14-10-2-13-7-4-7-2-10z"/><path fill="#9c9db6" d="M8 6c-1 4 3 12 9 15-3-5-5-11-5-17z"/></symbol>
  <symbol id="s-cyl" viewBox="0 0 32 30"><path fill="url(#gCyl)" d="M3 5v19c0 7 26 7 26 0V5z"/><ellipse cx="16" cy="6" rx="13" ry="6" fill="#d5e9df"/></symbol>
  <symbol id="s-hcyl" viewBox="0 0 32 30"><path fill="#eee" d="M8 18h15l-1 8c-4 3-9 3-12 0z"/><path fill="#2a2a86" d="M0 12L16 0l16 12-16 13z"/><ellipse cx="17" cy="12.500" rx="9.500" ry="7.500" fill="#d4d5de"/><path fill="#8c8da0" d="M8 12c1-9 17-9 18 0-5-4-13-4-18 0z"/><path fill="#fff" d="M10 16c3-4 10-4 14 0-3 5-11 5-14 0z"/></symbol>
  <symbol id="s-ell" viewBox="0 0 32 30"><path fill="url(#gCyl)" d="M3 13v12c3 7 20 4 26-5V5z"/><path fill="#e2f2ea" d="M3 13C4 4 20-2 29 2c2 6-6 12-17 13-5 0-9 0-9-2z"/></symbol>
  <symbol id="s-poly" viewBox="0 0 32 30"><path fill="#b4cac2" d="M6 5l16-4 8 10-13 4z"/><path fill="#d3eae2" d="M2 14L7 5l10 8-6 14z"/><path fill="#c4dad2" d="M2 14l9 2 3 13-8-5z"/><path fill="#93ada4" d="M18 14l12-3-9 16-6 3-2-6z"/></symbol>
  <symbol id="s-hpoly" viewBox="0 0 32 30"><circle cx="24" cy="20" r="8.500" fill="#e6e6ea"/><path fill="#2a2a86" d="M12 1h20L19 25 0 20z"/><path fill="#d0d2de" d="M9 10l6-7 8 1 1 8-6 7-9-1z"/><path fill="#b2b4c6" d="M15 3l8 1 1 8-5 3z"/></symbol>
  <symbol id="s-sph" viewBox="0 0 32 30"><ellipse cx="16" cy="15" rx="14" ry="14.500" fill="url(#gBall)"/></symbol>
  <symbol id="s-hsph" viewBox="0 0 32 30"><path fill="#23237c" d="M0 15L16 1l15 2-5 3-16 6 1 8z"/><path fill="#ccd0e2" stroke="#6b6ea8" stroke-width=".8" d="M8 13c3-8 20-12 23-3 2 8-3 16-10 15-4-1-4-4-6-6-3 0-7-2-7-6z"/></symbol>
  <symbol id="s-pie" viewBox="0 0 32 30"><path fill="#e2f2ea" d="M4 1l25 8-12 6z"/><path fill="#c8ddd3" d="M4 1l13 14-2 14L6 17z"/><path fill="#9fb7ad" d="M17 15l12-6v12l-13 9z"/></symbol>
  <symbol id="s-hpie" viewBox="0 0 32 30"><circle cx="21" cy="12" r="10" fill="#dcdce4"/><path fill="#2a2a86" d="M3 1l18 5v24L3 22z"/><path fill="#e4e5f0" d="M8 7c6-2 10 2 9 7l-6-3-1 5 8 1c0 6-8 7-11 0z"/></symbol>
  <symbol id="s-tor" viewBox="0 0 32 30"><ellipse cx="16" cy="15" rx="11" ry="11.500" fill="none" stroke="#85a5a0" stroke-width="7"/><ellipse cx="16" cy="15" rx="11.500" ry="12" fill="none" stroke="#dff0ec" stroke-width="2"/></symbol>
  <symbol id="s-htor" viewBox="0 0 32 30"><path fill="#2a2a86" d="M8 1l24 4-6 24-25-6z"/><ellipse cx="17" cy="15" rx="7.500" ry="8" fill="#3c3d90" stroke="#d2d3e4" stroke-width="6"/></symbol>
  <symbol id="s-cone" viewBox="0 0 32 30"><path fill="url(#gCyl)" d="M30 1L8 11c-8 6-3 19 6 18 3 0 6-1 8-3z"/><path fill="#84a096" fill-opacity=".5" d="M30 1L16 28l-5-2z"/></symbol>
  <symbol id="s-hcone" viewBox="0 0 32 30"><path fill="#2a2a86" d="M14 1h14l-1 4L10 27l-1 3-9-5z"/><path fill="url(#gLav)" stroke="#666aa0" stroke-width=".6" d="M26 3l5 23-20 1C8 15 15 5 26 3z"/></symbol>
  <symbol id="s-pyr" viewBox="0 0 32 30"><path fill="#a8bdb3" d="M17 0L2 29h28z"/><path fill="#cfe2d8" d="M17 0L2 29l9-9z"/></symbol>
  <symbol id="s-hpyr" viewBox="0 0 32 30"><path fill="#2a2a86" d="M14 1h14l-1 4L12 25l-3 5-9-5z"/><path fill="#d2d9ea" stroke="#666aa0" stroke-width=".6" d="M22 3L9 23l22 2-4-20z"/><path fill="#8f95ba" d="M26 4l5 20-7-7z"/></symbol>
  <symbol id="s-pcone" viewBox="0 0 32 30"><path fill="url(#gCyl)" d="M4 10C9 1 26-2 28 8c1 8-4 18-12 21C6 27 1 17 4 10z"/><circle cx="20" cy="9" r="8" fill="#cfe2d8"/></symbol>
  <symbol id="s-hpcone" viewBox="0 0 32 30"><path fill="#2a2a86" d="M14 1h14l-1 4L10 27l-1 3-9-5z"/><path fill="url(#gLav)" d="M28 4v11c-4 1-5 6-3 12l-12-2C7 16 16 5 28 4z"/></symbol>
  <symbol id="s-bar" viewBox="0 0 32 30"><path fill="#bccfc6" d="M14 1l16 1-9 12L2 10z"/><path fill="#dff2ec" d="M2 10l19 4-4 16L2 20z"/><path fill="#93aba2" d="M30 2l-9 12-4 16z"/></symbol>
  <symbol id="s-rib" viewBox="0 0 32 30"><path fill="#8ba39c" d="M3 2v22l26 5z"/><path fill="#c9ddd5" d="M3 2l5-2 23 24-2 6z"/></symbol>
  <symbol id="s-l3" viewBox="0 0 32 30"><path fill="url(#gCyl)" d="M11 9l4 7-9 9c3 6 17 6 18 0l-4-10 5-4z"/><ellipse cx="18" cy="7" rx="13" ry="7" fill="#b9cdc4" transform="rotate(8 18 7)"/></symbol>
  <symbol id="s-twist" viewBox="0 0 32 30"><path fill="#dcece4" d="M13 1l13 1 4 10-12 3-11-5z"/><path fill="url(#gPale)" d="M7 10l11 5 12-3-9 9 3 4-9 5-5-6 2-4L2 16z"/></symbol>
  <symbol id="s-slab2" viewBox="0 0 32 30"><path fill="url(#gPale)" d="M6 13L30 1l-3 28H2z"/><path stroke="#2030d0" stroke-width="1.500" d="M14 28l2-10"/><path stroke="#e02020" stroke-width="2" d="M8 28h8"/></symbol>
  <symbol id="s-cyl2" viewBox="0 0 32 30"><path fill="url(#gPale)" d="M2 12C4 0 26-3 30 6c2 8-5 21-14 23C6 28 0 20 2 12z"/><path stroke="#2030d0" stroke-width="1.500" d="M15 28l-3-12"/><path stroke="#e02020" stroke-width="2" d="M13 28h5"/></symbol>
  <symbol id="s-sph2" viewBox="0 0 32 30"><ellipse cx="16" cy="14.500" rx="14" ry="14" fill="url(#gBall)"/><path stroke="#e02020" stroke-width="2" d="M13 29h7"/></symbol>
  <symbol id="s-ptor" viewBox="0 0 32 30"><path fill="none" stroke="#8fa8a2" stroke-width="12" d="M6 7c14-3 20 7 15 20"/><path fill="none" stroke="#e4f2ee" stroke-width="6" d="M5 6c13-3 18 7 14 19"/></symbol>
  <symbol id="s-egg" viewBox="0 0 32 30"><ellipse cx="16" cy="15" rx="16" ry="11" fill="url(#gEgg)" transform="rotate(-32 16 15)"/></symbol>
  <symbol id="s-hegg" viewBox="0 0 32 30"><path fill="#0c0c4c" d="M14 4l18-1-3 3-15 10 2 8 8 1-1 2H1z"/><path fill="#cfd6ff" d="M32 6l-2 14-8 6c-6 1-10-2-10-7 1-7 10-14 20-13z"/></symbol>
</svg>

<header class="topbar">
  <div class="qat d-flex align-items-start position-relative">
    <svg class="i16 mx-1"><use href="#app"/></svg>
    <button class="flat" aria-label="New"><svg class="i16"><use href="#page"/></svg></button>
    <button class="flat" aria-label="New scene"><svg class="i16"><use href="#page-red"/></svg></button>
    <button class="flat" aria-label="New IronCAD"><svg class="i16"><use href="#page-i"/></svg></button>
    <button class="flat" aria-label="New drawing"><svg class="i16"><use href="#page-ii"/></svg></button>
    <button class="flat" aria-label="New CAXA"><svg class="i16"><use href="#page-blue"/></svg></button>
    <button class="flat" aria-label="Open"><svg class="i16"><use href="#folder"/></svg></button>
    <button class="flat" aria-label="Save"><svg class="i16"><use href="#disk"/></svg></button>
    <button class="flat" aria-label="Save as"><svg class="i16"><use href="#disk-edit"/></svg></button>
    <button class="flat" aria-label="Insert"><svg class="i16"><use href="#greybox"/></svg></button>
    <button class="flat" aria-label="Add part"><svg class="i16"><use href="#addpart"/></svg></button>
    <button class="flat" aria-label="Export"><svg class="i16"><use href="#greydisk"/></svg></button>
    <button class="flat" aria-label="Undo"><svg class="i16"><use href="#undo"/></svg></button>
    <button class="flat" aria-label="Redo"><svg class="i16"><use href="#redo"/></svg></button>
    <button class="flat" aria-label="TriBall"><svg class="i16"><use href="#orb"/></svg></button>
    <button class="flat lit" aria-label="Scene browser"><svg class="i16"><use href="#scenetree"/></svg></button>
    <button class="flat lit" aria-label="Catalog browser"><svg class="i16"><use href="#gridicon"/></svg></button>
    <button class="flat" aria-label="Property list"><svg class="i16"><use href="#listicon"/></svg></button>
    <button class="flat" aria-label="Paint"><svg class="i16"><use href="#brush"/></svg></button>
    <button class="flat" aria-label="Customize"><span class="tri tri-w"></span></button>
    <div class="apptitle position-absolute start-0 end-0 text-center">IRONCAD 2019 (NFR) - [Scene2*]</div>
    <div class="winbtns ms-auto d-flex position-relative">
      <button class="flat" aria-label="Minimize"><svg width="10" height="10"><use href="#min"/></svg></button>
      <button class="flat" aria-label="Restore"><svg width="10" height="10"><use href="#restore"/></svg></button>
      <button class="flat" aria-label="Close"><svg width="9" height="9"><use href="#x"/></svg></button>
    </div>
  </div>
  <nav class="menu-row d-flex">
    <ul class="nav flex-nowrap ps-0">
      <li class="nav-item"><a href="#">Menu</a></li><li class="nav-item"><a href="#">Home</a></li><li class="nav-item"><a href="#">Feature</a></li><li class="nav-item"><a href="#">Sketch</a></li><li class="nav-item"><a href="#">Surface</a></li><li class="nav-item"><a href="#">Assembly</a></li><li class="nav-item"><a href="#">Sheet Metal</a></li><li class="nav-item"><a href="#" class="current">Tools</a></li><li class="nav-item"><a href="#">Smart Markup</a></li><li class="nav-item"><a href="#">Visualization</a></li><li class="nav-item"><a href="#">Annotation</a></li><li class="nav-item"><a href="#">Common</a></li><li class="nav-item"><a href="#">Add-Ins</a></li>
    </ul>
    <div class="mdi ms-auto d-flex align-items-center">
      <span>Styles</span><span class="tri tri-w mx-2"></span>
      <svg width="14" height="14"><use href="#help"/></svg><span class="tri tri-w ms-2 me-1"></span>
      <button class="flat" aria-label="Minimize document"><svg width="10" height="10"><use href="#min"/></svg></button>
      <button class="flat" aria-label="Restore document"><svg width="10" height="10"><use href="#restore"/></svg></button>
      <button class="flat" aria-label="Close document"><svg width="9" height="9"><use href="#x"/></svg></button>
    </div>
  </nav>
</header>

<section class="ribbon d-flex">
  <div class="rgroup">
    <div class="rbody g-pos">
      <button class="flat rbig off"><svg class="i32"><use href="#R-triball"/></svg><span><u>T</u>riBall</span></button>
      <div class="rcol">
        <button class="flat rsmall"><svg class="i16"><use href="#cubes-y"/></svg><span><u>P</u>ositioning Constraints</span></button>
        <button class="flat rsmall off"><svg class="i16"><use href="#cubes-g"/></svg><span>Mate &amp; <u>A</u>lign Positioning</span></button>
        <button class="flat rsmall"><svg class="i16"><use href="#fixed"/></svg><span><u>F</u>ixed in Parent</span></button>
      </div>
    </div>
    <div class="rtitle">Positioning</div>
  </div>
  <div class="rgroup">
    <div class="rbody g-ins">
      <button class="flat rbig"><svg class="i32"><use href="#R-mech"/></svg><span><u>M</u>echanism<br>Mode</span></button>
      <button class="flat rbig off"><svg class="i32"><use href="#R-check"/></svg><span>Check<br><u>I</u>nterference</span></button>
      <button class="flat rbig"><svg class="i32"><use href="#R-draft"/></svg><span>Draft<br><u>A</u>nalysis</span></button>
      <div class="rcol">
        <button class="flat rsmall off"><svg class="i16"><use href="#analysis"/></svg><span><u>A</u>nalysis</span></button>
        <button class="flat rsmall off"><svg class="i16"><use href="#stat"/></svg><span><u>S</u>tatistics</span></button>
        <button class="flat rsmall"><svg class="i16"><use href="#clear"/></svg><span>Check <u>C</u>learance</span></button>
      </div>
    </div>
    <div class="rtitle">Inspection</div>
  </div>
  <div class="rgroup">
    <div class="rbody g-ops">
      <button class="flat rbig"><svg class="i32"><use href="#R-suppress"/></svg><span><u>S</u>uppress</span><span class="tri mt-1"></span></button>
      <button class="flat rbig off"><svg class="i32"><use href="#R-ghost"/></svg><span>Ghost</span><span class="tri tri-off mt-1"></span></button>
      <button class="flat rbig"><svg class="i32"><use href="#R-shrink"/></svg><span>Shrink<br>Wrap</span></button>
      <button class="flat rbig"><svg class="i32"><use href="#R-coord"/></svg><span>Coordinate<br>System</span></button>
      <button class="flat rbig off"><svg class="i32"><use href="#R-regen"/></svg><span><u>R</u>egenerate</span></button>
      <button class="flat rbig"><svg class="i32"><use href="#R-recreate"/></svg><span>Recreat<u>e</u><br>Display</span></button>
      <div class="rcol">
        <button class="flat rsmall"><svg class="i16"><use href="#combine"/></svg><span><u>C</u>ombine Shapes</span></button>
        <button class="flat rsmall off"><svg class="i16"><use href="#faces"/></svg><span><u>F</u>aces to IntelliShape</span></button>
        <button class="flat rsmall off"><svg class="i16"><use href="#convert"/></svg><span>Con<u>v</u>ert to Solid</span></button>
      </div>
      <div class="rcol">
        <button class="flat rsmall"><svg class="i16"><use href="#group"/></svg><span><u>G</u>roup</span></button>
        <button class="flat rsmall"><svg class="i16"><use href="#gchild"/></svg><span>Group <u>C</u>hild</span></button>
        <button class="flat rsmall"><svg class="i16"><use href="#anchor"/></svg><span><u>M</u>ove Anchor</span></button>
      </div>
      <div class="rcol">
        <button class="flat rsmall"><svg class="i16"><use href="#resetbox"/></svg><span>Reset Si<u>z</u>ebox</span></button>
        <button class="flat rsmall off"><svg class="i16"><use href="#section"/></svg><span>Section Part/Assembly</span></button>
        <button class="flat rsmall"><svg class="i16"><use href="#find"/></svg><span>Find in Scene Browser</span></button>
      </div>
      <div class="rcol">
        <button class="flat rsmall"><svg class="i16"><use href="#props"/></svg><span>Shape <u>P</u>roperties</span></button>
        <button class="flat rsmall"><svg class="i16"><use href="#zebra"/></svg><span><u>Z</u>ebra Stripes</span></button>
        <button class="flat rsmall"><svg class="i16"><use href="#dxf"/></svg><span>Import Reference 2D</span></button>
      </div>
    </div>
    <div class="rtitle">Operations</div>
  </div>
  <div class="rgroup">
    <div class="rbody g-int">
      <button class="flat rbig"><svg class="i32"><use href="#R-sigma"/></svg><span>Query<br>Properties</span></button>
      <button class="flat rbig"><svg class="i32"><use href="#R-attach"/></svg><span>Attac<u>h</u>ment<br>Point</span></button>
      <button class="flat rbig"><svg class="i32"><use href="#R-attach2"/></svg><span>Attachment<br>Point Connector</span></button>
      <button class="flat rbig"><svg class="i32"><use href="#R-compose"/></svg><span>Convert<br>Compose Data</span></button>
    </div>
    <div class="rtitle">Intelligence</div>
  </div>
</section>

<div class="selbar d-flex align-items-center">
  <span class="grip"></span>
  <button class="flat" aria-label="Redo selection"><svg class="i16"><use href="#arrowcur"/></svg></button>
  <button class="flat pressed ms-1 me-1" aria-label="Select"><svg class="i16"><use href="#cursor"/></svg></button>
  <button class="flat me-1" aria-label="Box select"><svg class="i16"><use href="#boxcur"/></svg></button>
  <select class="combo me-1" aria-label="Selection mode" disabled><option>Default</option></select>
  <select class="combo soft me-1" aria-label="Filter"><option>Any</option></select>
  <select class="combo me-1" aria-label="Configuration"><option>Default</option></select>
  <button class="flat" aria-label="Structure"><svg class="i16"><use href="#hier"/></svg></button>
</div>

<div class="doc-row d-flex align-items-center">
  <div class="doc-tab d-flex align-items-center justify-content-between align-self-end">
    <svg width="109" height="20" viewBox="0 0 109 20"><path fill="#fff" stroke="#aaa" d="M.5 20C10 14 14 2 20 .5h86q2.500 0 2.500 3V20"/></svg>
    <b>Scene2*</b><button class="flat" aria-label="Close tab"><svg width="8" height="8"><use href="#x"/></svg></button>
  </div>
  <span class="tri tri-lg ms-auto me-1"></span>
</div>

<main class="d-flex flex-grow-1">
  <aside class="tools">
    <div class="toolstrip d-flex flex-column">
      <div class="hgrip"></div>
      <button class="flat" aria-label="Extrude"><svg class="i16"><use href="#b-add"/></svg></button>
      <button class="flat" aria-label="Union"><svg class="i16"><use href="#b-one"/></svg></button>
      <hr>
      <button class="flat" aria-label="Boolean add"><svg class="i16"><use href="#b-one"/></svg></button>
      <button class="flat" aria-label="Boolean intersect"><svg class="i16"><use href="#b-one"/></svg></button>
      <button class="flat" aria-label="Boolean subtract"><svg class="i16"><use href="#b-two"/></svg></button>
      <span class="left-tri"></span>
      <div class="hgrip"></div>
      <button class="flat" aria-label="Front view"><svg class="i16"><use href="#v-front"/></svg></button>
      <button class="flat" aria-label="Top view"><svg class="i16"><use href="#v-top"/></svg></button>
      <button class="flat" aria-label="Left view"><svg class="i16"><use href="#v-left"/></svg></button>
      <button class="flat" aria-label="Right view"><svg class="i16"><use href="#v-right"/></svg></button>
      <button class="flat" aria-label="Back view"><svg class="i16"><use href="#v-back"/></svg></button>
      <button class="flat" aria-label="Bottom view"><svg class="i16"><use href="#v-bottom"/></svg></button>
      <button class="flat" aria-label="Isometric 1"><svg class="i16"><use href="#v-iso"/></svg></button>
      <button class="flat" aria-label="Isometric 2"><svg class="i16"><use href="#v-iso2"/></svg></button>
      <button class="flat" aria-label="Isometric 3"><svg class="i16"><use href="#v-iso3"/></svg></button>
      <button class="flat" aria-label="Isometric 4"><svg class="i16"><use href="#v-iso4"/></svg></button>
      <span class="left-tri"></span>
      <div class="hgrip"></div>
      <button class="flat" aria-label="Linear dimension"><svg class="i16"><use href="#d-lin"/></svg></button>
      <button class="flat" aria-label="Horizontal dimension"><svg class="i16"><use href="#d-h"/></svg></button>
      <button class="flat" aria-label="Vertical dimension"><svg class="i16"><use href="#d-v"/></svg></button>
      <button class="flat" aria-label="Angle"><svg class="i16"><use href="#d-ang"/></svg></button>
      <button class="flat" aria-label="Radius"><svg class="i16"><use href="#d-rad"/></svg></button>
      <button class="flat" aria-label="Diameter"><svg class="i16"><use href="#d-dia"/></svg></button>
      <hr>
      <button class="flat" aria-label="Annotation"><svg class="i16"><use href="#d-note"/></svg></button>
      <button class="flat" aria-label="Thread"><svg class="i16"><use href="#d-thread"/></svg></button>
      <span class="left-tri"></span>
    </div>
  </aside>

  <div class="d-flex flex-column flex-grow-1">
    <div class="d-flex flex-grow-1">
      <section class="scene d-flex flex-column">
        <div class="pane-head d-flex align-items-center ps-1 pe-1">
          <span class="me-auto">Scene</span>
          <span class="hbtn"><span class="tri tri-lg"></span></span><button class="flat hbtn" aria-label="Pin"><svg width="9" height="11"><use href="#pin"/></svg></button><button class="flat hbtn" aria-label="Close pane"><svg width="9" height="9"><use href="#x"/></svg></button>
        </div>
        <div class="findrow">
          <input class="search flex-grow-1" type="text" placeholder="Search ..." aria-label="Search scene">
          <button class="xbtn" aria-label="Clear search"><svg width="14" height="14"><use href="#xred"/></svg></button>
          <button class="flat treebtn" aria-label="Filter tree"><svg class="i16"><use href="#scenetree"/></svg></button>
        </div>
        <ul class="tree flex-grow-1">
          <li><svg class="i16 me-1"><use href="#t-scene"/></svg>Scene2</li>
          <li class="kid"><svg width="16" height="18" viewBox="0 0 16 18"><path stroke="#888" stroke-dasharray="1 1" d="M4.500 0v18M9 9.500h7"/><use href="#plus" y="5" width="9" height="9"/></svg><svg class="i16 me-1"><use href="#t-axes"/></svg>Global Coordinate System</li>
          <li class="kid"><svg width="16" height="18" viewBox="0 0 16 18"><path stroke="#888" stroke-dasharray="1 1" d="M4.500 0v18M9 9.500h7"/><use href="#plus" y="5" width="9" height="9"/></svg><svg class="i16 me-1"><use href="#t-part"/></svg><b>Part1</b></li>
          <li class="kid"><svg width="16" height="18" viewBox="0 0 16 18"><path stroke="#888" stroke-dasharray="1 1" d="M4.500 0v18M9 9.500h7"/><use href="#plus" y="5" width="9" height="9"/></svg><svg class="i16 me-1"><use href="#t-cam"/></svg>Cameras</li>
          <li class="kid"><svg width="16" height="18" viewBox="0 0 16 18"><path stroke="#888" stroke-dasharray="1 1" d="M4.500 0v9M9 9.500h7"/><use href="#plus" y="5" width="9" height="9"/></svg><svg class="i16 me-1"><use href="#t-light"/></svg>Lights</li>
        </ul>
        <div class="d-flex">
          <a href="#" class="ptab on"><svg class="i16"><use href="#atree"/></svg>Scene</a>
          <a href="#" class="ptab"><svg class="i16"><use href="#props"/></svg>Properties</a>
          <a href="#" class="ptab"><svg class="i16"><use href="#mag"/></svg>Search</a>
        </div>
      </section>

      <section class="view3d flex-grow-1">
        <svg viewBox="266 207 1654 562" preserveAspectRatio="xMinYMin meet">
          <defs>
            <linearGradient id="mCyl" gradientUnits="userSpaceOnUse" x1="904" x2="1223" y1="0" y2="0"><stop offset="0" stop-color="#8f837a"/><stop offset=".25" stop-color="#91857c"/><stop offset=".4" stop-color="#9d9187"/><stop offset=".49" stop-color="#beb4a9"/><stop offset=".57" stop-color="#beb4a9"/><stop offset=".66" stop-color="#978b82"/><stop offset=".75" stop-color="#8b7f77"/><stop offset="1" stop-color="#9b8e85"/></linearGradient>
            <linearGradient id="mSide" gradientUnits="userSpaceOnUse" x1="844" x2="1284" y1="0" y2="0"><stop offset="0" stop-color="#8d8178"/><stop offset=".38" stop-color="#95897f"/><stop offset=".54" stop-color="#c0b6ab"/><stop offset=".7" stop-color="#8f837a"/><stop offset="1" stop-color="#9b8e85"/></linearGradient>
            <radialGradient id="mDome" gradientUnits="userSpaceOnUse" cx="1110" cy="420" r="200"><stop offset="0" stop-color="#aa9d92"/><stop offset=".6" stop-color="#a2958a"/><stop offset="1" stop-color="#897e76"/></radialGradient>
            <radialGradient id="mHot"><stop offset="0" stop-color="#fffaf4"/><stop offset=".35" stop-color="#f3e8df" stop-opacity=".9"/><stop offset="1" stop-color="#b0a398" stop-opacity="0"/></radialGradient>
            <linearGradient id="mTube" gradientUnits="userSpaceOnUse" x1="928" y1="393" x2="964" y2="453"><stop offset="0" stop-color="#a59a90"/><stop offset=".11" stop-color="#f0e3d9"/><stop offset=".28" stop-color="#aa9d93"/><stop offset=".48" stop-color="#a09389"/><stop offset=".66" stop-color="#fbf0e7"/><stop offset=".82" stop-color="#b2a59a"/><stop offset="1" stop-color="#93877d"/></linearGradient>
            <linearGradient id="mHole" gradientUnits="userSpaceOnUse" x1="822" y1="538" x2="850" y2="606"><stop offset="0" stop-color="#91867c"/><stop offset=".3" stop-color="#9d9186"/><stop offset=".5" stop-color="#f5eae1"/><stop offset=".68" stop-color="#a3968b"/><stop offset=".85" stop-color="#a89b90"/><stop offset="1" stop-color="#eee3d9"/></linearGradient>
            <clipPath id="cDome"><circle cx="1063.500" cy="460" r="159"/></clipPath>
          </defs>
          <g stroke="#3f3d3c" stroke-width="1.500" stroke-linejoin="round">
            <path fill="url(#mSide)" d="M843.500 603v24a220 128 0 0 0 440 0v-24z"/>
            <ellipse cx="1063.500" cy="603" rx="220" ry="128" fill="#b2a59a"/>
            <circle cx="1063.500" cy="460" r="159" fill="url(#mDome)" stroke="none"/>
            <path fill="url(#mCyl)" stroke="none" d="M904.500 540v63a159 92 0 0 0 318 0v-63z"/>
            <path fill="#9b8e85" stroke="none" d="M1200 500l22.500-40v100H1200z"/>
            <path fill="none" d="M1222.500 460v143a159 92 0 0 1-318 0M1222.500 460c0 14-6 27-14 38"/>
            <g clip-path="url(#cDome)" stroke="none"><ellipse cx="1056" cy="309" rx="60" ry="20" fill="url(#mHot)"/><ellipse cx="1151" cy="421" rx="46" ry="56" fill="url(#mHot)"/></g>
            <ellipse cx="1032" cy="440" rx="20" ry="42" fill="url(#mHot)" stroke="none"/>
            <path fill="#9c9086" stroke="none" d="M853 477l119-35 63-35-15 43-20 60-6 74-8 18-118 67-24 12z"/>
            <path fill="#84796f" fill-opacity=".7" stroke="none" d="M972.500 442l62.500-35-15 43h-60z"/>
            <path fill="#a5988d" stroke="none" d="M885 616l55-32h54l-8 18-118 67z"/>
            <path fill="#c0b4a9" stroke="none" d="M868 669l105-58 8-4-4 6-54 32-38 22-8 4z"/>
            <path fill="url(#mTube)" stroke="none" d="M824 458l39-26 65-39 64-36c26-15 48-25 71.500-27-10 34-20 62-30 77l-62 36-96 58-24-14z"/>
            <path fill="none" d="M992 357c26-15 48-25 71.500-27l-28.500 77-15 43M972.500 442l62.500-35M885 616l55-32M868 669l118-67 8-18M972.500 615c8-2 11-6 13-13"/>
            <path fill="#90847b" d="M824 458c-8 0-14 3-17.500 9L785 527q-2 10-1 20l22.500 93c5 20 18 42 38 43.500 12 0 19-7 22.500-20l17-48c4-15 2-30-2-49l-16-66c-6-22-20-43-42-42.500z"/>
            <ellipse cx="835" cy="571.500" rx="25" ry="45" transform="rotate(-28 835 571.500)" fill="url(#mHole)"/>
          </g>
          <g fill="none" stroke="#f4ee86" stroke-width="1.300">
            <path fill="#f4ee86" fill-opacity=".45" stroke="none" d="M820 478l31 12v36l-31-19z"/>
            <path d="M819.500 471L903 423l32 18M903 423v30M819.500 471v36l32 19v-37l-32-18M851.500 489l25-13M851.500 526l30-17"/>
            <path stroke-width="2" stroke-dasharray="6 4" d="M824 479l93-47M905 427l28 14M822 517l56-30M830 520l50-28"/>
          </g>
          <g fill="none" stroke="#0ff" stroke-width="2">
            <path d="M795 457l24 14M825 452l-20 12M805 464l12-1M805 464l7-9M869 427l19-11M877 409l26 14M888 416l-12-1M888 416l-5 8M903 423l24-13M913 414l38 22M913 414l11 0M913 414l8 8M951 436l-5-10M951 436l-12-1M937 444l22-16M951 436l-4 10"/>
            <path stroke="#0a9a9a" d="M835 500v-12M846 502l-8 6"/>
          </g>
          <g fill="#0ff" font-family="Noto Sans, sans-serif" font-size="20"><text x="889" y="398">0.380</text><text x="820" y="444">1.000</text><text x="922" y="456">0.380</text><text x="851" y="480">0.</text></g>
          <g stroke="#111" stroke-width="1.500">
            <path stroke-width="2" d="M848 457l13 8M932 441l-12 12M877 443v10M823 506l13-7"/>
            <circle cx="848" cy="458" r="4" fill="#c41028"/><circle cx="932" cy="442" r="4" fill="#c41028"/><circle cx="877" cy="442" r="4" fill="#ffee10"/><circle cx="823" cy="506" r="4" fill="#c41028"/><circle cx="835" cy="499" r="3" fill="#0a7070"/><circle cx="876" cy="508" r="4" fill="#c41028"/>
          </g>
          <circle cx="824" cy="490" r="8" fill="#7fd0f4" stroke="#1680c0"/><path stroke="#d8f4ff" fill="none" d="M817 487q7-4 14 0M824 482v16"/><circle cx="824" cy="490" r="1.500" fill="#d02020"/>
          <path fill="none" stroke="#111" stroke-width="3.500" d="M841 493v-4q2-5 5 0v4"/><path fill="none" stroke="#fff" stroke-width="1.500" d="M841 494v-5q2-5 5 0v5"/>
          <path fill="#fff" stroke="#000" d="M809.500 516.500h19v18h-19z"/><path fill="#999" stroke="#111" d="M815.500 522.500l2-2h6v6l-2 3h-6z"/><path stroke="#e01010" stroke-width="1.500" d="M819 518v3M819 530v3M811 525h3M825 525h3"/>
          <g font-family="Liberation Sans, sans-serif" font-size="11"><text x="301" y="712" fill="#1818e8">Z</text><text x="281" y="724" fill="#20e020">Y</text><text x="320" y="724" fill="#e02020">X</text></g>
          <path stroke="#8a90e8" stroke-width="3" d="M303 732v-9"/><path fill="#2020a0" d="M303 716l3 9h-6z"/><path stroke="#80d080" stroke-width="3" d="M303 733l-7-4"/><path fill="#0c6a14" d="M288 725l10 1-4 6z"/><path stroke="#e08080" stroke-width="3" d="M303 733l7-4"/><path fill="#8a1010" d="M317 725l-10 1 4 6z"/><circle cx="303" cy="733" r="2.500" fill="#fff"/>
        </svg>
        <form class="dlg" onsubmit="return false">
          <div class="dlg-head d-flex align-items-center justify-content-between"><span>Edit Sizebox</span><button type="button" class="flat" aria-label="Close dialog"><svg width="12" height="12"><use href="#x"/></svg></button></div>
          <div class="dlg-body d-flex">
            <div class="fields">
              <label for="len">Length:</label><input id="len" type="text" value="0.380">
              <label for="wid">Width:</label><input id="wid" type="text" value="0.380">
              <label for="hei">Height:</label><input id="hei" type="text" value="1">
            </div>
            <div class="pushes"><button class="push def">OK</button><button type="button" class="push">Cancel</button><button type="button" class="push">Help</button></div>
          </div>
        </form>
      </section>
    </div>

    <div class="split"></div>

    <section>
      <div class="pane-head d-flex align-items-center ps-1">
        <span class="me-auto">Catalog Browser</span>
        <span class="hbtn"><span class="tri tri-lg"></span></span><button class="flat hbtn" aria-label="Pin catalog"><svg width="9" height="11"><use href="#pin"/></svg></button><button class="flat hbtn" aria-label="Close catalog"><svg width="9" height="9"><use href="#x"/></svg></button>
      </div>
      <div class="catbtns">
        <button class="catbtn"><svg class="i16" viewBox="0 0 16 16"><path fill="#fff" stroke="#444" d="M2.500 1.500h10v13h-10zM12.500 2.500l2 0v5"/><path fill="#444" d="M5 4h2v2H5zM9 4h2v2H9zM5 9h2v2H5zM9 9h2v2H9z"/></svg>New</button>
        <button class="catbtn"><svg class="i16" viewBox="0 0 16 16"><path fill="#ddd" stroke="#444" d="M1.500 1.500l5 2v11l-5-2zM6.500 2.500h6v11h-6z"/><path fill="none" stroke="#444" d="M8 6h3M14 9q2 3-1 5"/></svg>Open</button>
        <button class="catbtn"><svg class="i16" viewBox="0 0 16 16"><path fill="#fff" stroke="#444" d="M5.500.5h9v11h-9z"/><path fill="#5a5a48" d="M1 6h9v9H1z"/><path fill="#eee" d="M3 7h5v3H3zM4 12h3v3H4zM8 3h2v1H8z"/></svg>Save</button>
        <button class="catbtn"><svg class="i16" viewBox="0 0 16 16"><path fill="#ddd" stroke="#444" d="M1.500 1.500h8v12h-8z"/><path fill="none" stroke="#444" d="M12 3v6M12 9q4 1 2 5"/></svg>Close</button>
      </div>
      <div class="findrow catfind">
        <button class="xbtn" aria-label="Back"><svg width="16" height="14" viewBox="0 0 16 14"><path fill="#b0b0b0" d="M1 7l7-6v3h7v6H8v3z"/></svg></button>
        <input class="search flex-grow-1" type="text" placeholder="Search ..." aria-label="Search catalog">
        <button class="xbtn" aria-label="Clear catalog search"><svg width="14" height="14"><use href="#xred"/></svg></button>
      </div>
      <div class="shapes d-flex flex-wrap align-content-start">
        <div class="shape"><svg><use href="#s-block"/></svg>Block</div>
        <div class="shape"><svg><use href="#s-hblock"/></svg>H Block</div>
        <div class="shape"><svg><use href="#s-slab"/></svg>Slab</div>
        <div class="shape"><svg><use href="#s-hslab"/></svg>H Slab</div>
        <div class="shape"><svg><use href="#s-slot"/></svg>Slot</div>
        <div class="shape"><svg><use href="#s-hslot"/></svg>H Slot</div>
        <div class="shape"><svg><use href="#s-cyl"/></svg>Cylinder</div>
        <div class="shape"><svg><use href="#s-hcyl"/></svg>H Cylinder</div>
        <div class="shape"><svg><use href="#s-ell"/></svg>Ellipse</div>
        <div class="shape"><svg><use href="#s-hcyl"/></svg>H Ellipse</div>
        <div class="shape"><svg><use href="#s-poly"/></svg>Poly</div>
        <div class="shape"><svg><use href="#s-hpoly"/></svg>H Poly</div>
        <div class="shape"><svg><use href="#s-sph"/></svg>Sphere</div>
        <div class="shape"><svg><use href="#s-hsph"/></svg>H Sphere</div>
        <div class="shape"><svg><use href="#s-pie"/></svg>Pie</div>
        <div class="shape"><svg><use href="#s-hpie"/></svg>H Pie</div>
        <div class="shape"><svg><use href="#s-tor"/></svg>Torus</div>
        <div class="shape"><svg><use href="#s-htor"/></svg>H Torus</div>
        <div class="shape"><svg><use href="#s-cone"/></svg>Cone</div>
        <div class="shape"><svg><use href="#s-hcone"/></svg>H Cone</div>
        <div class="shape"><svg><use href="#s-pyr"/></svg>Pyramid</div>
        <div class="shape"><svg><use href="#s-hpyr"/></svg>H Pyramid</div>
        <div class="shape"><svg><use href="#s-pcone"/></svg>Part Cone</div>
        <div class="shape"><svg><use href="#s-hpcone"/></svg>H Part Cone</div>
        <div class="shape"><svg><use href="#s-bar"/></svg>Bar</div>
        <div class="shape"><svg><use href="#s-rib"/></svg>Rib</div>
        <div class="shape"><svg><use href="#s-l3"/></svg>L3 Circles</div>
        <div class="shape"><svg><use href="#s-twist"/></svg>Twist</div>
        <div class="shape"><svg><use href="#s-slab2"/></svg>Slab2</div>
        <div class="shape"><svg><use href="#s-cyl2"/></svg>Cylinder2</div>
        <div class="shape"><svg><use href="#s-sph2"/></svg>Sphere2</div>
        <div class="shape"><svg><use href="#s-ptor"/></svg>Partial Torus</div>
        <div class="shape"><svg><use href="#s-egg"/></svg>Ellipsoid</div>
        <div class="shape"><svg><use href="#s-hegg"/></svg>H Ellipsoid</div>
      </div>
      <nav class="ctabs d-flex align-items-start">
        <a href="#">Starter</a><a href="#" class="on">Shapes</a><a href="#">Advshaps</a><a href="#">FlexShapes</a><a href="#">SheetMtl</a><a href="#">Tools</a><a href="#">Materials</a><a href="#">Animatn</a><a href="#">Surfaces</a><a href="#">Textures</a><a href="#">Bumps</a><a href="#">Colors</a><a href="#">Steel Frames</a><a href="#">Tank</a>
        <span class="tri tri-lg ms-auto me-1 mt-2"></span>
      </nav>
    </section>
  </div>
</main>

<footer>
  <div class="status d-flex align-items-center">
    <span class="me-auto">For Help, press F1</span>
    <span class="me-4 pe-1">View size: 1656 x&nbsp; 564</span>
    <span class="me-3">Units: in, deg</span>
    <button class="flat" aria-label="Zoom page"><svg class="i16"><use href="#zoomp"/></svg></button>
    <button class="flat drop" aria-label="Zoom window"><svg class="i16"><use href="#zoomp"/></svg><span class="tri"></span></button>
    <button class="flat drop" aria-label="Add view"><svg class="i16"><use href="#boxy"/></svg><span class="tri"></span></button>
    <button class="flat drop" aria-label="View cube"><svg class="i16"><use href="#v-front"/></svg><span class="tri"></span></button>
    <button class="flat drop" aria-label="Walk"><svg class="i16"><use href="#walk"/></svg><span class="tri"></span></button>
    <button class="flat" aria-label="Perspective"><svg class="i16"><use href="#wedge"/></svg></button>
    <button class="flat drop tight" aria-label="Look at"><svg class="i16"><use href="#glasses"/></svg><span class="tri"></span></button>
    <button class="flat drop tight" aria-label="Render style"><svg class="i16"><use href="#cubebk"/></svg><span class="tri"></span></button>
    <button class="flat drop tight" aria-label="Part mode"><svg class="i16"><use href="#t-part"/></svg><span class="tri"></span></button>
    <button class="flat" aria-label="Repeat select"><svg class="i16"><use href="#arrowcur"/></svg></button>
    <button class="flat pressed" aria-label="Pick"><svg class="i16"><use href="#cursor"/></svg></button>
    <button class="flat" aria-label="Pick ghost"><svg class="i16"><use href="#cursor-g"/></svg></button>
    <select class="combo drill" aria-label="Drilldown"><option>Drilldown: Int</option></select>
    <select class="combo conf ms-1" aria-label="Default configuration"><option>Default</option></select>
    <button class="flat" aria-label="Structure tree"><svg class="i16"><use href="#hier2"/></svg></button>
  </div>
  <div class="edge"></div>
</footer>

<script src="https://cdn.jsdelivr.net/npm/bootstrap@5.3.0/dist/js/bootstrap.bundle.min.js"></script>
<script>document.getElementById('len').select();</script>
</body>
</html>
